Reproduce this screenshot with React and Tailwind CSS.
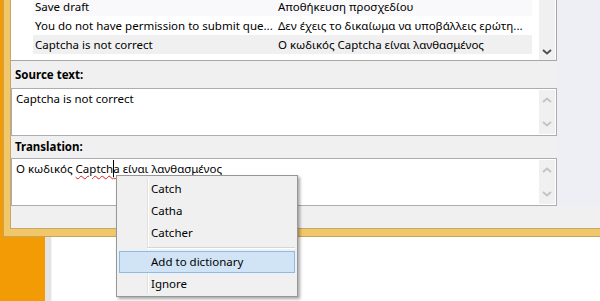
const font = { fontFamily: '"Noto Sans", "Open Sans", sans-serif' }

const rows = [
  { src: 'Save draft', dst: 'Αποθήκευση προσχεδίου', bg: 'bg-[#f9f9fb]', first: true },
  { src: 'You do not have permission to submit que...', dst: 'Δεν έχεις το δικαίωμα να υποβάλλεις ερώτη...', bg: 'bg-white' },
  { src: 'Captcha is not correct', dst: 'Ο κωδικός Captcha είναι λανθασμένος', bg: 'bg-[#f0f0f0]' },
]

function Chevron({ up, color }) {
  return (
    <svg width="10" height="6" viewBox="0 0 10 6" className="block">
      <polyline
        points={up ? '1,5 5,1.5 9,5' : '1,1 5,4.5 9,1'}
        fill="none"
        stroke={color}
        strokeWidth="2"
      />
    </svg>
  )
}

function TextScroll() {
  return (
    <div className="w-[16px] my-px mr-px bg-[#f0f0f0] flex flex-col items-center justify-between py-[7px]">
      <Chevron up color="#c4c4c4" />
      <Chevron color="#c4c4c4" />
    </div>
  )
}

function TextBox({ children }) {
  return (
    <div className="h-[48px] flex bg-white border border-[#abadb3]">
      <div className="flex-1 pl-[4px] pt-[1px] leading-[17px]">{children}</div>
      <TextScroll />
    </div>
  )
}

function MenuItem({ label, active }) {
  return (
    <div
      className={`h-[22px] flex items-center pl-[31px] border ${
        active ? 'bg-[#d1e4f6] border-[#8cbbe8]' : 'border-transparent'
      }`}
    >
      {label}
    </div>
  )
}

export default function App() {
  return (
    <div className="w-[600px] h-[301px] overflow-hidden relative bg-white text-[11.5px] text-black" style={font}>
      {/* main window */}
      <div className="flex h-[237px]">
        <div className="w-[3px] bg-[#f29b05]" />
        <div className="flex-1 bg-[#f0c86b] border-l border-b border-[#c7a458] pl-[6px] pb-[7px] flex">
          <div className="flex-1 bg-[#f0f0f0] border-l border-b border-[#c5a865] flex flex-col">
            <div className="h-[206px] flex">
              <div className="w-[546px] flex flex-col">
                {/* list */}
                <div className="h-[61px] bg-white border-r border-b border-[#a6a6a6] flex overflow-hidden">
                  <div className="w-[22px]" />
                  <div className="w-[499px] flex flex-col">
                    {rows.map((r) => (
                      <div
                        key={r.src}
                        className={`h-[19px] shrink-0 flex items-center ${r.bg} ${r.first ? '-mt-[3px]' : ''}`}
                      >
                        <span className="w-[245px] pl-[2px] whitespace-nowrap">{r.src}</span>
                        <span className="whitespace-nowrap">{r.dst}</span>
                      </div>
                    ))}
                  </div>
                  <div className="w-[7px]" />
                  <div className="w-[16px] mr-px bg-[#f0f0f0] flex flex-col items-center justify-end pb-[5px]">
                    <Chevron color="#505050" />
                  </div>
                </div>

                <div className="h-[27px] flex items-center pl-[4px] font-bold">Source text:</div>
                <TextBox>Captcha is not correct</TextBox>

                <div className="h-[22px] flex items-center pl-[4px] font-bold">Translation:</div>
                <TextBox>
                  Ο κωδικός{' '}
                  <span className="underline decoration-wavy decoration-[#e02020] decoration-1 underline-offset-2">
                    Captch
                    <span className="inline-block w-px h-[17px] -mr-px bg-black align-[-4px]" />
                    a
                  </span>{' '}
                  είναι λανθασμένος
                </TextBox>
              </div>
              <div className="ml-px flex-1 bg-[#edeff4]" />
            </div>
            <div className="flex-1" />
          </div>
        </div>
      </div>

      {/* window behind */}
      <div className="flex h-[64px]">
        <div className="w-[45px] bg-[#f29b05]" />
        <div className="w-[7px] bg-[#e4e4e4] border-r border-[#f2f2f2]" />
        <div className="flex-1 bg-white" />
      </div>

      {/* context menu */}
      <div className="absolute left-[116px] top-[175px] w-[182px] bg-[#f0f0f0] border border-[#979797] p-[2px] pb-[1px] shadow-[2px_2px_3px_rgba(0,0,0,0.35)]">
        <div className="absolute left-[30px] top-[2px] bottom-[2px] w-[2px] border-l border-[#e0e0e0] border-r border-r-white" />
        <div className="relative">
          <MenuItem label="Catch" />
          <MenuItem label="Catha" />
          <MenuItem label="Catcher" />
          <div className="h-[7px] pt-[3px] pl-[28px]">
            <div className="h-[2px] border-t border-[#d7d7d7] border-b border-b-white" />
          </div>
          <MenuItem label="Add to dictionary" active />
          <MenuItem label="Ignore" />
        </div>
      </div>
    </div>
  )
}
